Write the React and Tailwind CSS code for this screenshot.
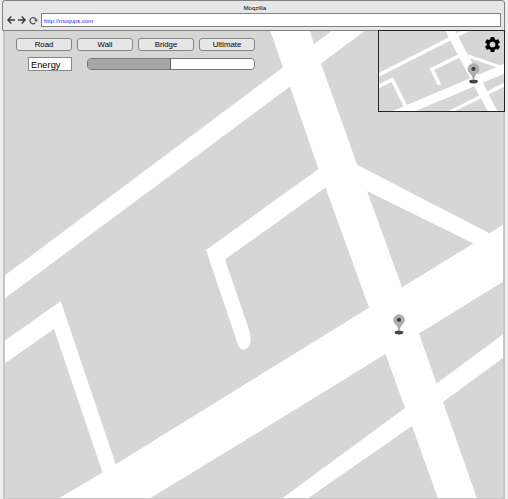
import React from "react";

const ROADS = [
  "M4 276L283 67.3L333 30H366L321 63.5L290 86.5L4 299Z",
  "M270 30H309.5L314.3 45L321 63.5L357.3 165L367 191L402 287.3L419 333.5L436.5 383.5L443 402L477 498.5H438L412 426L405 408L385.5 354L369 307.7L325.5 187.5L318.5 169L290 86.5L283 67.3Z",
  "M330 160.7L206 250L236.7 341Q239 349.7 243.5 349.7Q251.5 348 250.7 338L250 332.7L225 259.5L335 180.7Z",
  "M350 161.2L357.3 165L489.5 233.3L505 223.5V280.4L419 333.5L385.5 354L260 431.3L150 498.3H59L102.5 472.5L54 329L4 364V341.3L60.7 301.3L115.7 464.2L260 375L369 307.7L402 287.3L473.5 243.5L367 191L350 186Z",
  "M505 332.7V356.5L443 402L412 426L308 498.3H282.3L405 408L436.5 383.5Z",
];

function RoadMap({ className, viewBox }) {
  return (
    <svg className={className} viewBox={viewBox} preserveAspectRatio="none">
      {ROADS.map((d) => (
        <path key={d} d={d} fill="#fff" />
      ))}
    </svg>
  );
}

function Pin({ className }) {
  return (
    <svg className={className} viewBox="0 0 12 21">
      <ellipse cx="6" cy="18.5" rx="4.3" ry="1.9" fill="#444" />
      <path
        d="M6 17.2C5.7 13.6 4.3 11.7 2.2 9.7A5.3 5.3 0 1 1 9.8 9.7C7.7 11.7 6.3 13.6 6 17.2Z"
        fill="#b0b0b0"
        stroke="#8c8c8c"
        strokeWidth="0.6"
      />
      <circle cx="6" cy="5.9" r="2.1" fill="#3f3f3f" />
    </svg>
  );
}

function Arrow({ className }) {
  return (
    <svg className={className} viewBox="0 0 8 8" fill="none" stroke="#3c3c3c" strokeWidth="1.5">
      <path d="M8 4H1.2M4.3 0.6L1 4L4.3 7.4" />
    </svg>
  );
}

function Browser() {
  return (
    <header className="ml-[1.5px] flex h-[31px] w-[503.5px] shrink-0 flex-col rounded-t-[3px] border border-[#808080] bg-[#e6e6e6]">
      <div className="flex h-[12px] items-center justify-center pt-[2px] pl-[3px] text-[6.2px] leading-none text-black">
        Moqzilla
      </div>
      <div className="flex items-center pl-[4px]">
        <Arrow className="h-[8px] w-[8px]" />
        <Arrow className="ml-[3.5px] h-[8px] w-[8px] rotate-180" />
        <svg className="ml-[3px] h-[9px] w-[9px]" viewBox="0 0 9 9">
          <path d="M6.2 7A3.1 3.1 0 1 1 7.2 4.4" fill="none" stroke="#4a4a4a" strokeWidth="1.2" />
          <path d="M5 3.8H9L7.1 6.1Z" fill="#4a4a4a" />
        </svg>
        <div className="ml-[3px] flex h-[14px] w-[460px] items-center border border-[#808080] bg-white pt-px pl-[2px] text-[6px] leading-none text-[#2828f0]">
          http://moqups.com
        </div>
      </div>
    </header>
  );
}

function Toolbar() {
  return (
    <div className="relative pt-[7px] pl-[11px]">
      <div className="flex gap-[5px]">
        {["Road", "Wall", "Bridge", "Ultimate"].map((label) => (
          <button
            key={label}
            className="flex h-[13px] w-[56px] items-center justify-center rounded-[3px] border border-[#858585] bg-[#e6e6e6] text-[7.8px] leading-none text-black"
          >
            {label}
          </button>
        ))}
      </div>
      <div className="mt-[6px] flex items-start pl-[12px]">
        <div className="flex h-[14px] w-[44px] items-center border border-[#858585] bg-white pt-[4px] pl-[2px] text-[9.3px] leading-none text-black">
          Energy
        </div>
        <div className="mt-px ml-[15px] h-[12px] w-[168px] overflow-hidden rounded-[4px] border border-[#777] bg-white">
          <div className="h-full w-1/2 border-r border-[#666] bg-[#a6a6a6]" />
        </div>
      </div>
    </div>
  );
}

function MiniMap() {
  return (
    <div className="absolute -top-px right-[-2px] h-[82px] w-[127px] border border-[#222] bg-[#d6d6d6]">
      <RoadMap className="block h-full w-full" viewBox="4 31 500 468" />
      <Pin className="absolute top-[32px] left-[88px] h-[21px] w-[13px]" />
      <svg className="absolute top-[4px] right-[2px] h-[19px] w-[19px]" viewBox="0 0 24 24">
        <path d="M19.14 12.94c.04-.3.06-.61.06-.94s-.02-.64-.07-.94l2.03-1.58a.49.49 0 0 0 .12-.61l-1.92-3.32a.49.49 0 0 0-.59-.22l-2.39.96a7 7 0 0 0-1.62-.94l-.36-2.54a.48.48 0 0 0-.48-.41h-3.84a.48.48 0 0 0-.47.41l-.36 2.54a7.3 7.3 0 0 0-1.62.94l-2.39-.96a.48.48 0 0 0-.59.22L2.73 8.87a.48.48 0 0 0 .12.61l2.03 1.58a6.2 6.2 0 0 0 0 1.88l-2.03 1.58a.49.49 0 0 0-.12.61l1.92 3.32c.12.22.37.29.59.22l2.39-.96c.5.38 1.03.7 1.62.94l.36 2.54c.05.24.24.41.48.41h3.84c.24 0 .44-.17.47-.41l.36-2.54a7.2 7.2 0 0 0 1.62-.94l2.39.96c.22.08.47 0 .59-.22l1.92-3.32a.48.48 0 0 0-.12-.61ZM12 15.6a3.6 3.6 0 1 1 0-7.2 3.6 3.6 0 0 1 0 7.2Z" />
      </svg>
    </div>
  );
}

export default function App() {
  return (
    <div className="flex h-[499px] w-[508px] flex-col overflow-hidden bg-[#eee] font-['Liberation_Sans',Arial,sans-serif]">
      <Browser />
      <main className="relative ml-[3px] h-[468px] w-[502px] border-x-2 border-b border-[#c6c6c6] bg-[#d6d6d6]">
        <RoadMap className="absolute top-0 left-0 h-[467px] w-[498px]" viewBox="5 31 498 467" />
        <Toolbar />
        <MiniMap />
        <Pin className="absolute top-[283px] left-[387.5px] h-[21px] w-[12px]" />
      </main>
    </div>
  );
}
